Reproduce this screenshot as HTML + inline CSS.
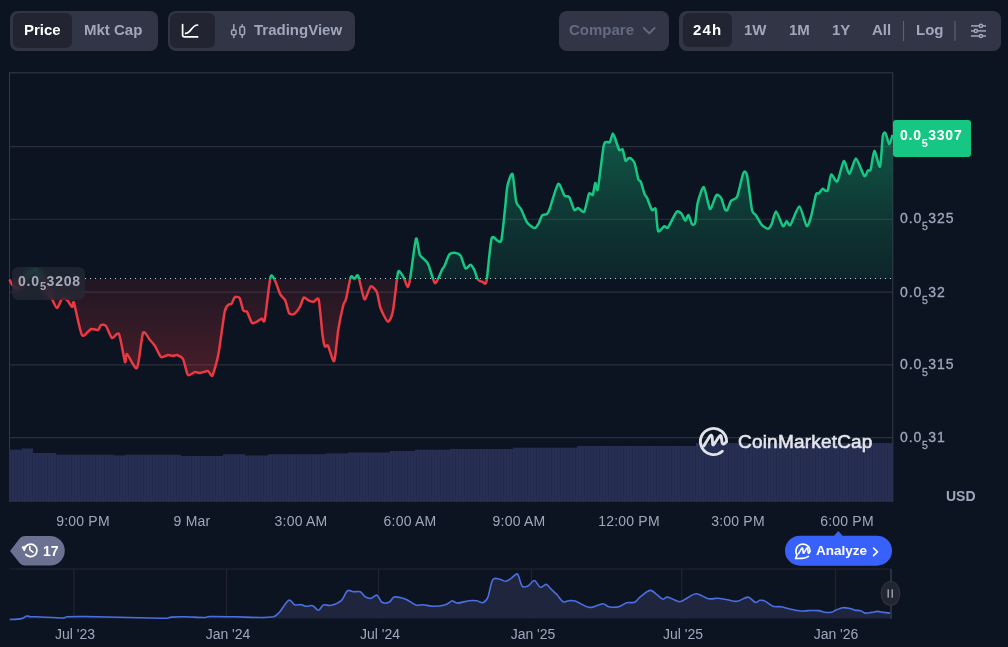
<!DOCTYPE html>
<html><head><meta charset="utf-8"><style>
*{margin:0;padding:0;box-sizing:border-box}
html,body{width:1008px;height:647px;overflow:hidden;background:#0d1421;font-family:"Liberation Sans",sans-serif}
.t{position:absolute;white-space:nowrap;will-change:transform}
.b{position:absolute}
svg{position:absolute;left:0;top:0}
sub{font-size:0.75em;vertical-align:baseline;position:relative;top:0.62em;letter-spacing:0.5px}
</style></head><body>
<div class="b" style="left:10px;top:11px;width:148px;height:40px;border-radius:8px;background:#323546"></div><div class="b" style="left:13px;top:13px;width:59px;height:35px;border-radius:6px;background:#222531"></div><div class="t" style="left:23.5px;top:20.72px;font-size:15px;line-height:17.23px;color:#ffffff;font-weight:700;">Price</div>
<div class="t" style="left:83.5px;top:20.72px;font-size:15px;line-height:17.23px;color:#a1a7bb;font-weight:700;">Mkt Cap</div>
<div class="b" style="left:168px;top:11px;width:187px;height:40px;border-radius:8px;background:#323546"></div><div class="b" style="left:170px;top:13px;width:45px;height:35px;border-radius:6px;background:#222531"></div><svg width="1008" height="647" style="pointer-events:none"><path d="M182.6,24.6 V35 Q182.6,36.9 184.5,36.9 H197.6" stroke="#fff" stroke-width="1.7" fill="none" stroke-linecap="round"/><path d="M185.6,33.4 C191.5,33.4 191.2,25 197.6,25" stroke="#fff" stroke-width="1.7" fill="none" stroke-linecap="round"/><g stroke="#a1a7bb" stroke-width="1.5" fill="none" stroke-linecap="round"><line x1="233.8" y1="24.8" x2="233.8" y2="37.6"/><rect x="231.55" y="29.95" width="4.5" height="4.9" rx="1.3" fill="#323546"/><line x1="242.2" y1="24.8" x2="242.2" y2="37.6"/><rect x="239.85" y="26.85" width="4.7" height="7.8" rx="1.3" fill="#323546"/></g></svg><div class="t" style="left:253.5px;top:21.12px;font-size:15px;line-height:17.23px;color:#a1a7bb;font-weight:700;">TradingView</div>
<div class="b" style="left:559px;top:11px;width:110px;height:40px;border-radius:8px;background:#323546"></div><div class="t" style="left:569px;top:21.22px;font-size:15px;line-height:17.23px;color:#646b80;font-weight:700;">Compare</div>
<svg width="1008" height="647"><path d="M643.8,28 L649.2,33.4 L654.6,28" stroke="#646b80" stroke-width="1.8" fill="none" stroke-linecap="round" stroke-linejoin="round"/></svg><div class="b" style="left:679px;top:11px;width:321.6px;height:39.6px;border-radius:8px;background:#323546"></div><div class="b" style="left:683px;top:13px;width:49px;height:34px;border-radius:6px;background:#222531"></div><div class="t" style="left:692.5px;top:21.22px;font-size:15px;line-height:17.23px;color:#ffffff;font-weight:700;letter-spacing:1.2px">24h</div>
<div class="t" style="left:744px;top:21.22px;font-size:15px;line-height:17.23px;color:#a1a7bb;font-weight:700;">1W</div>
<div class="t" style="left:788.5px;top:21.22px;font-size:15px;line-height:17.23px;color:#a1a7bb;font-weight:700;">1M</div>
<div class="t" style="left:831.5px;top:21.22px;font-size:15px;line-height:17.23px;color:#a1a7bb;font-weight:700;">1Y</div>
<div class="t" style="left:871.5px;top:21.22px;font-size:15px;line-height:17.23px;color:#a1a7bb;font-weight:700;">All</div>
<div class="t" style="left:916px;top:21.22px;font-size:15px;line-height:17.23px;color:#a1a7bb;font-weight:700;">Log</div>
<svg width="1008" height="647"><g stroke="#5b6075" stroke-width="1.2"><line x1="903.5" y1="21" x2="903.5" y2="41"/><line x1="955" y1="21" x2="955" y2="41"/></g><g stroke="#a1a7bb" stroke-width="1.5" fill="#323546"><line x1="971" y1="25.9" x2="986" y2="25.9"/><line x1="971" y1="30.9" x2="986" y2="30.9"/><line x1="971" y1="36" x2="986" y2="36"/><circle cx="980.9" cy="25.9" r="1.6"/><circle cx="975.8" cy="30.9" r="1.6"/><circle cx="980.9" cy="36" r="1.6"/></g></svg><svg width="1008" height="647">
<defs>
<clipPath id="above"><rect x="0" y="0" width="893" height="279"/></clipPath>
<clipPath id="below"><rect x="0" y="279" width="893" height="300"/></clipPath>
<linearGradient id="gG" x1="0" y1="120" x2="0" y2="279" gradientUnits="userSpaceOnUse"><stop offset="0" stop-color="#16c784" stop-opacity="0.40"/><stop offset="0.283" stop-color="#16c784" stop-opacity="0.31"/><stop offset="0.692" stop-color="#16c784" stop-opacity="0.17"/><stop offset="1" stop-color="#16c784" stop-opacity="0.10"/></linearGradient>
<linearGradient id="gR" x1="0" y1="279" x2="0" y2="380" gradientUnits="userSpaceOnUse"><stop offset="0" stop-color="#ea3943" stop-opacity="0.09"/><stop offset="1" stop-color="#ea3943" stop-opacity="0.27"/></linearGradient>
</defs>
<g stroke="#2b2f3c" stroke-width="1.1">
<line x1="9" y1="72.8" x2="893" y2="72.8" stroke="#363a47" stroke-width="1"/>
<line x1="9" y1="146.6" x2="893" y2="146.6"/>
<line x1="9" y1="219.3" x2="893" y2="219.3"/>
<line x1="9" y1="292.1" x2="893" y2="292.1"/>
<line x1="9" y1="364.9" x2="893" y2="364.9"/>
<line x1="9" y1="437.6" x2="893" y2="437.6"/>
<line x1="9.5" y1="72.5" x2="9.5" y2="502" stroke="#343845" stroke-width="1"/>
<line x1="892.8" y1="72.5" x2="892.8" y2="502" stroke="#353946" stroke-width="1"/>
</g>
<clipPath id="volc"><path d="M9,501.5 L9,449.8 L22,449.8 L22,448.4 L33,448.4 L33,453 L56,453 L56,454.7 L114,454.7 L114,455.6 L125,455.6 L125,454.7 L181,454.7 L181,456 L223,456 L223,454.3 L245,454.3 L245,455.6 L268,455.6 L268,454.3 L326,454.3 L326,453.4 L348,453.4 L348,452.5 L390,452.5 L390,451 L415,451 L415,449.8 L450,449.8 L450,449 L513,449 L513,447.7 L577,447.7 L577,446 L696,446 L696,443 L893,443 L893,501.5 Z"/></clipPath>
<path d="M9,501.5 L9,449.8 L22,449.8 L22,448.4 L33,448.4 L33,453 L56,453 L56,454.7 L114,454.7 L114,455.6 L125,455.6 L125,454.7 L181,454.7 L181,456 L223,456 L223,454.3 L245,454.3 L245,455.6 L268,455.6 L268,454.3 L326,454.3 L326,453.4 L348,453.4 L348,452.5 L390,452.5 L390,451 L415,451 L415,449.8 L450,449.8 L450,449 L513,449 L513,447.7 L577,447.7 L577,446 L696,446 L696,443 L893,443 L893,501.5 Z" fill="#272f53"/>
<path d="M11.5,440 V502 M14.5,440 V502 M17.5,440 V502 M20.5,440 V502 M23.5,440 V502 M26.5,440 V502 M29.5,440 V502 M32.5,440 V502 M35.5,440 V502 M38.5,440 V502 M41.5,440 V502 M44.5,440 V502 M47.5,440 V502 M50.5,440 V502 M53.5,440 V502 M56.5,440 V502 M59.5,440 V502 M62.5,440 V502 M65.5,440 V502 M68.5,440 V502 M71.5,440 V502 M74.5,440 V502 M77.5,440 V502 M80.5,440 V502 M83.5,440 V502 M86.5,440 V502 M89.5,440 V502 M92.5,440 V502 M95.5,440 V502 M98.5,440 V502 M101.5,440 V502 M104.5,440 V502 M107.5,440 V502 M110.5,440 V502 M113.5,440 V502 M116.5,440 V502 M119.5,440 V502 M122.5,440 V502 M125.5,440 V502 M128.5,440 V502 M131.5,440 V502 M134.5,440 V502 M137.5,440 V502 M140.5,440 V502 M143.5,440 V502 M146.5,440 V502 M149.5,440 V502 M152.5,440 V502 M155.5,440 V502 M158.5,440 V502 M161.5,440 V502 M164.5,440 V502 M167.5,440 V502 M170.5,440 V502 M173.5,440 V502 M176.5,440 V502 M179.5,440 V502 M182.5,440 V502 M185.5,440 V502 M188.5,440 V502 M191.5,440 V502 M194.5,440 V502 M197.5,440 V502 M200.5,440 V502 M203.5,440 V502 M206.5,440 V502 M209.5,440 V502 M212.5,440 V502 M215.5,440 V502 M218.5,440 V502 M221.5,440 V502 M224.5,440 V502 M227.5,440 V502 M230.5,440 V502 M233.5,440 V502 M236.5,440 V502 M239.5,440 V502 M242.5,440 V502 M245.5,440 V502 M248.5,440 V502 M251.5,440 V502 M254.5,440 V502 M257.5,440 V502 M260.5,440 V502 M263.5,440 V502 M266.5,440 V502 M269.5,440 V502 M272.5,440 V502 M275.5,440 V502 M278.5,440 V502 M281.5,440 V502 M284.5,440 V502 M287.5,440 V502 M290.5,440 V502 M293.5,440 V502 M296.5,440 V502 M299.5,440 V502 M302.5,440 V502 M305.5,440 V502 M308.5,440 V502 M311.5,440 V502 M314.5,440 V502 M317.5,440 V502 M320.5,440 V502 M323.5,440 V502 M326.5,440 V502 M329.5,440 V502 M332.5,440 V502 M335.5,440 V502 M338.5,440 V502 M341.5,440 V502 M344.5,440 V502 M347.5,440 V502 M350.5,440 V502 M353.5,440 V502 M356.5,440 V502 M359.5,440 V502 M362.5,440 V502 M365.5,440 V502 M368.5,440 V502 M371.5,440 V502 M374.5,440 V502 M377.5,440 V502 M380.5,440 V502 M383.5,440 V502 M386.5,440 V502 M389.5,440 V502 M392.5,440 V502 M395.5,440 V502 M398.5,440 V502 M401.5,440 V502 M404.5,440 V502 M407.5,440 V502 M410.5,440 V502 M413.5,440 V502 M416.5,440 V502 M419.5,440 V502 M422.5,440 V502 M425.5,440 V502 M428.5,440 V502 M431.5,440 V502 M434.5,440 V502 M437.5,440 V502 M440.5,440 V502 M443.5,440 V502 M446.5,440 V502 M449.5,440 V502 M452.5,440 V502 M455.5,440 V502 M458.5,440 V502 M461.5,440 V502 M464.5,440 V502 M467.5,440 V502 M470.5,440 V502 M473.5,440 V502 M476.5,440 V502 M479.5,440 V502 M482.5,440 V502 M485.5,440 V502 M488.5,440 V502 M491.5,440 V502 M494.5,440 V502 M497.5,440 V502 M500.5,440 V502 M503.5,440 V502 M506.5,440 V502 M509.5,440 V502 M512.5,440 V502 M515.5,440 V502 M518.5,440 V502 M521.5,440 V502 M524.5,440 V502 M527.5,440 V502 M530.5,440 V502 M533.5,440 V502 M536.5,440 V502 M539.5,440 V502 M542.5,440 V502 M545.5,440 V502 M548.5,440 V502 M551.5,440 V502 M554.5,440 V502 M557.5,440 V502 M560.5,440 V502 M563.5,440 V502 M566.5,440 V502 M569.5,440 V502 M572.5,440 V502 M575.5,440 V502 M578.5,440 V502 M581.5,440 V502 M584.5,440 V502 M587.5,440 V502 M590.5,440 V502 M593.5,440 V502 M596.5,440 V502 M599.5,440 V502 M602.5,440 V502 M605.5,440 V502 M608.5,440 V502 M611.5,440 V502 M614.5,440 V502 M617.5,440 V502 M620.5,440 V502 M623.5,440 V502 M626.5,440 V502 M629.5,440 V502 M632.5,440 V502 M635.5,440 V502 M638.5,440 V502 M641.5,440 V502 M644.5,440 V502 M647.5,440 V502 M650.5,440 V502 M653.5,440 V502 M656.5,440 V502 M659.5,440 V502 M662.5,440 V502 M665.5,440 V502 M668.5,440 V502 M671.5,440 V502 M674.5,440 V502 M677.5,440 V502 M680.5,440 V502 M683.5,440 V502 M686.5,440 V502 M689.5,440 V502 M692.5,440 V502 M695.5,440 V502 M698.5,440 V502 M701.5,440 V502 M704.5,440 V502 M707.5,440 V502 M710.5,440 V502 M713.5,440 V502 M716.5,440 V502 M719.5,440 V502 M722.5,440 V502 M725.5,440 V502 M728.5,440 V502 M731.5,440 V502 M734.5,440 V502 M737.5,440 V502 M740.5,440 V502 M743.5,440 V502 M746.5,440 V502 M749.5,440 V502 M752.5,440 V502 M755.5,440 V502 M758.5,440 V502 M761.5,440 V502 M764.5,440 V502 M767.5,440 V502 M770.5,440 V502 M773.5,440 V502 M776.5,440 V502 M779.5,440 V502 M782.5,440 V502 M785.5,440 V502 M788.5,440 V502 M791.5,440 V502 M794.5,440 V502 M797.5,440 V502 M800.5,440 V502 M803.5,440 V502 M806.5,440 V502 M809.5,440 V502 M812.5,440 V502 M815.5,440 V502 M818.5,440 V502 M821.5,440 V502 M824.5,440 V502 M827.5,440 V502 M830.5,440 V502 M833.5,440 V502 M836.5,440 V502 M839.5,440 V502 M842.5,440 V502 M845.5,440 V502 M848.5,440 V502 M851.5,440 V502 M854.5,440 V502 M857.5,440 V502 M860.5,440 V502 M863.5,440 V502 M866.5,440 V502 M869.5,440 V502 M872.5,440 V502 M875.5,440 V502 M878.5,440 V502 M881.5,440 V502 M884.5,440 V502 M887.5,440 V502 M890.5,440 V502 " stroke="#232a4d" stroke-width="1" clip-path="url(#volc)"/>
<line x1="9" y1="501" x2="893" y2="501" stroke="#2c3350" stroke-width="1"/>
<path d="M9.5,279.4 C9.8,280.1 11.5,284.0 12.5,285.0 C13.5,286.0 16.7,288.6 18.0,288.0 C19.3,287.4 22.6,281.9 24.0,280.0 C25.4,278.1 28.5,273.2 30.0,272.0 C31.5,270.8 35.4,268.7 37.0,270.0 C38.6,271.3 42.2,279.6 44.0,283.0 C45.8,286.4 50.5,296.1 52.0,299.0 C53.5,301.9 55.8,308.0 57.0,308.0 C58.2,308.0 60.8,299.9 62.0,299.0 C63.2,298.1 65.8,299.1 67.0,300.0 C68.2,300.9 71.2,306.6 72.0,307.0 C72.8,307.4 72.8,299.7 74.0,303.0 C75.2,306.3 80.0,332.0 82.0,335.0 C84.0,338.0 89.1,329.6 91.0,329.0 C92.9,328.4 96.8,330.5 98.0,330.0 C99.2,329.5 100.1,325.5 101.0,325.0 C101.9,324.5 104.7,324.5 106.0,326.0 C107.3,327.5 110.5,337.1 112.0,338.0 C113.5,338.9 117.5,331.2 119.0,334.0 C120.5,336.8 124.1,359.7 125.0,362.0 C125.9,364.3 125.6,353.3 127.0,354.0 C128.4,354.7 135.1,370.4 137.0,368.0 C138.9,365.6 141.5,336.3 143.0,333.0 C144.5,329.7 148.6,338.5 150.0,340.0 C151.4,341.5 153.7,344.0 155.0,346.0 C156.3,348.0 159.5,355.9 161.0,357.0 C162.5,358.1 166.6,355.1 168.0,355.0 C169.4,354.9 171.9,356.0 173.0,356.0 C174.1,356.0 175.8,354.6 177.0,355.0 C178.2,355.4 181.7,356.7 183.0,359.0 C184.3,361.3 186.6,373.5 188.0,375.0 C189.4,376.5 193.6,372.2 195.0,372.0 C196.4,371.8 198.5,373.1 200.0,373.0 C201.5,372.9 206.6,370.7 208.0,371.0 C209.4,371.3 211.2,377.5 212.4,375.5 C213.6,373.5 217.1,361.1 218.5,353.7 C219.9,346.3 223.5,317.4 224.7,311.7 C225.9,306.0 227.6,305.7 228.4,304.8 C229.2,303.9 230.9,304.7 231.6,303.8 C232.3,302.9 233.7,298.1 234.6,297.4 C235.5,296.7 238.6,296.5 239.6,298.0 C240.6,299.5 242.4,308.9 243.3,310.5 C244.2,312.1 246.0,310.3 247.0,311.7 C248.0,313.1 250.8,321.6 252.0,322.8 C253.2,324.0 255.8,322.1 256.9,321.6 C258.0,321.1 260.9,318.8 261.8,318.6 C262.7,318.4 263.8,324.5 264.8,319.6 C265.8,314.7 269.3,281.4 270.5,277.0 C271.7,272.6 274.3,279.5 275.4,281.5 C276.5,283.5 279.1,292.2 280.3,294.4 C281.5,296.6 284.3,298.4 285.3,300.6 C286.3,302.8 288.0,311.4 289.0,313.0 C290.0,314.6 292.7,314.7 294.0,314.0 C295.3,313.3 298.9,308.6 300.0,306.7 C301.1,304.8 302.8,298.3 303.8,297.6 C304.8,296.9 307.6,300.1 308.8,300.6 C310.0,301.1 312.5,301.9 313.7,301.8 C314.9,301.7 317.7,296.0 318.7,299.8 C319.7,303.6 321.7,328.6 322.4,334.0 C323.1,339.4 324.1,344.9 324.8,346.3 C325.5,347.7 326.9,344.1 328.0,345.8 C329.1,347.5 333.0,363.0 334.2,361.0 C335.4,359.0 337.3,335.6 338.4,329.0 C339.5,322.4 342.5,308.3 343.4,304.8 C344.3,301.3 345.0,302.5 345.9,299.3 C346.8,296.1 349.8,279.4 350.8,277.0 C351.8,274.6 353.6,279.1 354.5,279.0 C355.4,278.9 357.0,273.4 358.2,275.8 C359.4,278.2 363.0,298.1 364.4,299.3 C365.8,300.5 369.2,287.4 370.6,286.5 C372.0,285.6 375.6,289.5 376.8,292.0 C378.0,294.5 379.2,304.5 380.5,308.0 C381.8,311.5 386.5,321.2 387.9,321.6 C389.3,322.0 391.6,317.3 392.8,311.7 C394.0,306.1 396.9,277.9 397.8,273.4 C398.7,268.9 400.0,272.3 400.7,272.9 C401.4,273.5 403.2,276.7 404.0,278.3 C404.8,279.9 407.0,286.8 407.7,287.0 C408.4,287.2 409.0,285.2 410.0,279.6 C411.0,274.0 414.9,241.7 416.0,238.8 C417.1,235.9 418.8,252.4 419.8,254.8 C420.8,257.2 423.7,258.6 424.7,259.8 C425.7,261.0 427.2,262.0 428.4,264.7 C429.6,267.4 433.4,281.2 434.6,282.8 C435.8,284.4 437.4,279.8 438.3,278.3 C439.2,276.8 441.3,271.1 442.0,269.7 C442.7,268.3 443.6,267.8 444.5,266.0 C445.4,264.2 448.1,255.9 449.4,254.4 C450.7,252.9 454.3,252.8 455.6,252.9 C456.9,253.0 459.4,253.8 460.6,255.6 C461.8,257.4 464.3,267.3 465.5,268.4 C466.7,269.5 469.5,264.5 470.5,264.7 C471.5,264.9 473.3,268.0 474.2,269.7 C475.1,271.4 476.9,278.2 477.9,279.6 C478.9,281.0 481.8,281.8 482.8,282.0 C483.8,282.2 485.5,286.3 486.5,281.3 C487.5,276.3 490.2,243.5 491.5,238.8 C492.8,234.1 496.5,240.7 497.7,240.8 C498.9,240.9 500.5,243.7 501.4,240.0 C502.3,236.3 504.3,215.3 505.0,209.0 C505.7,202.7 506.6,189.7 507.5,185.6 C508.4,181.5 511.5,172.1 512.5,174.0 C513.5,175.9 515.2,197.6 516.2,201.7 C517.2,205.8 519.7,206.6 521.0,209.0 C522.3,211.4 525.7,220.5 527.3,222.7 C528.9,224.9 533.4,227.9 534.7,228.1 C536.0,228.3 537.5,225.5 538.4,224.0 C539.3,222.5 541.2,216.5 542.2,215.3 C543.2,214.1 546.1,214.7 547.0,214.0 C547.9,213.3 548.3,212.5 549.6,209.0 C550.9,205.5 556.5,185.5 558.2,183.9 C559.9,182.3 563.1,193.9 564.4,195.5 C565.7,197.1 568.1,195.5 569.3,197.2 C570.5,198.9 573.3,208.7 574.3,209.9 C575.3,211.1 576.8,207.7 578.0,207.9 C579.2,208.1 582.9,213.2 584.2,211.6 C585.5,210.0 588.0,195.8 589.0,193.8 C590.0,191.8 592.1,196.1 592.8,194.8 C593.5,193.5 594.7,183.6 595.3,183.0 C595.9,182.4 596.8,193.6 597.8,189.3 C598.8,185.0 602.6,151.3 603.7,145.8 C604.8,140.3 606.7,142.5 607.4,142.1 C608.1,141.7 609.3,143.1 609.9,142.1 C610.5,141.1 612.2,133.6 612.9,133.5 C613.6,133.4 615.3,139.1 616.0,141.0 C616.7,142.9 618.5,149.0 619.3,150.0 C620.1,151.0 622.0,148.4 622.7,149.6 C623.4,150.8 624.8,159.7 625.5,160.7 C626.2,161.7 627.7,158.4 628.4,158.2 C629.1,158.0 630.9,158.4 631.6,159.0 C632.3,159.6 633.8,160.8 634.6,163.2 C635.4,165.6 637.6,177.0 638.3,179.2 C639.0,181.4 640.1,180.0 640.8,181.7 C641.5,183.4 643.8,192.1 644.5,194.0 C645.2,195.9 646.1,195.9 647.0,197.8 C647.9,199.7 650.9,208.7 651.9,210.0 C652.9,211.3 654.9,206.6 655.6,209.0 C656.3,211.4 657.1,229.0 658.1,231.0 C659.1,233.0 663.1,226.6 664.3,226.2 C665.5,225.8 666.6,229.1 668.0,227.4 C669.4,225.7 675.0,213.5 676.6,211.9 C678.2,210.3 680.6,212.8 681.6,213.8 C682.6,214.8 684.5,220.7 685.3,220.8 C686.1,220.9 687.7,214.6 688.5,215.0 C689.3,215.4 691.2,223.3 692.0,224.2 C692.8,225.1 694.5,225.0 695.2,222.5 C695.9,220.0 696.7,206.8 697.7,202.7 C698.7,198.6 702.4,186.4 703.8,187.1 C705.2,187.8 708.6,207.9 710.0,208.9 C711.4,209.9 714.9,196.6 716.2,195.3 C717.5,194.0 720.1,196.2 721.1,197.8 C722.1,199.4 724.1,207.5 724.8,208.9 C725.5,210.3 726.6,211.0 727.3,210.1 C728.0,209.2 729.8,202.6 731.0,201.0 C732.2,199.4 735.8,199.8 737.2,196.5 C738.6,193.2 742.2,175.4 743.4,173.0 C744.6,170.6 746.1,171.2 747.1,175.5 C748.1,179.8 751.0,205.5 752.0,210.1 C753.0,214.7 754.5,213.3 755.7,215.0 C756.9,216.7 760.5,223.4 761.9,225.0 C763.3,226.6 766.9,228.9 768.1,228.7 C769.3,228.5 770.9,225.7 771.8,223.7 C772.7,221.7 774.7,211.1 776.0,211.4 C777.3,211.7 781.8,225.1 783.0,226.2 C784.2,227.3 785.7,221.3 786.6,221.2 C787.5,221.1 788.9,226.7 790.4,225.0 C791.9,223.3 797.4,206.4 799.3,206.5 C801.2,206.6 805.3,224.9 806.7,226.0 C808.1,227.1 810.2,219.4 811.3,215.7 C812.4,212.0 815.1,197.0 816.0,194.4 C816.9,191.8 818.0,194.2 818.8,193.5 C819.6,192.8 821.7,189.1 822.5,188.8 C823.3,188.5 824.7,190.6 825.3,190.7 C825.9,190.8 827.3,191.7 828.0,189.8 C828.7,187.9 830.1,175.6 831.2,174.6 C832.3,173.6 835.8,183.0 837.3,181.4 C838.8,179.8 842.4,161.9 843.8,161.0 C845.2,160.1 848.0,174.3 849.4,174.0 C850.8,173.7 854.2,158.4 855.9,158.6 C857.6,158.8 862.8,174.5 864.2,175.9 C865.6,177.3 867.2,171.1 868.0,170.3 C868.8,169.5 870.0,171.7 870.7,169.4 C871.4,167.1 873.3,151.1 874.4,150.8 C875.5,150.5 879.0,168.3 880.0,166.6 C881.0,164.9 882.2,139.9 882.8,136.0 C883.4,132.1 884.7,132.2 885.5,133.2 C886.3,134.2 888.5,144.1 889.3,144.3 C890.1,144.5 892.1,136.1 892.5,135.0 L892.5,279 L9.5,279 Z" fill="url(#gG)" clip-path="url(#above)"/>
<path d="M9.5,279.4 C9.8,280.1 11.5,284.0 12.5,285.0 C13.5,286.0 16.7,288.6 18.0,288.0 C19.3,287.4 22.6,281.9 24.0,280.0 C25.4,278.1 28.5,273.2 30.0,272.0 C31.5,270.8 35.4,268.7 37.0,270.0 C38.6,271.3 42.2,279.6 44.0,283.0 C45.8,286.4 50.5,296.1 52.0,299.0 C53.5,301.9 55.8,308.0 57.0,308.0 C58.2,308.0 60.8,299.9 62.0,299.0 C63.2,298.1 65.8,299.1 67.0,300.0 C68.2,300.9 71.2,306.6 72.0,307.0 C72.8,307.4 72.8,299.7 74.0,303.0 C75.2,306.3 80.0,332.0 82.0,335.0 C84.0,338.0 89.1,329.6 91.0,329.0 C92.9,328.4 96.8,330.5 98.0,330.0 C99.2,329.5 100.1,325.5 101.0,325.0 C101.9,324.5 104.7,324.5 106.0,326.0 C107.3,327.5 110.5,337.1 112.0,338.0 C113.5,338.9 117.5,331.2 119.0,334.0 C120.5,336.8 124.1,359.7 125.0,362.0 C125.9,364.3 125.6,353.3 127.0,354.0 C128.4,354.7 135.1,370.4 137.0,368.0 C138.9,365.6 141.5,336.3 143.0,333.0 C144.5,329.7 148.6,338.5 150.0,340.0 C151.4,341.5 153.7,344.0 155.0,346.0 C156.3,348.0 159.5,355.9 161.0,357.0 C162.5,358.1 166.6,355.1 168.0,355.0 C169.4,354.9 171.9,356.0 173.0,356.0 C174.1,356.0 175.8,354.6 177.0,355.0 C178.2,355.4 181.7,356.7 183.0,359.0 C184.3,361.3 186.6,373.5 188.0,375.0 C189.4,376.5 193.6,372.2 195.0,372.0 C196.4,371.8 198.5,373.1 200.0,373.0 C201.5,372.9 206.6,370.7 208.0,371.0 C209.4,371.3 211.2,377.5 212.4,375.5 C213.6,373.5 217.1,361.1 218.5,353.7 C219.9,346.3 223.5,317.4 224.7,311.7 C225.9,306.0 227.6,305.7 228.4,304.8 C229.2,303.9 230.9,304.7 231.6,303.8 C232.3,302.9 233.7,298.1 234.6,297.4 C235.5,296.7 238.6,296.5 239.6,298.0 C240.6,299.5 242.4,308.9 243.3,310.5 C244.2,312.1 246.0,310.3 247.0,311.7 C248.0,313.1 250.8,321.6 252.0,322.8 C253.2,324.0 255.8,322.1 256.9,321.6 C258.0,321.1 260.9,318.8 261.8,318.6 C262.7,318.4 263.8,324.5 264.8,319.6 C265.8,314.7 269.3,281.4 270.5,277.0 C271.7,272.6 274.3,279.5 275.4,281.5 C276.5,283.5 279.1,292.2 280.3,294.4 C281.5,296.6 284.3,298.4 285.3,300.6 C286.3,302.8 288.0,311.4 289.0,313.0 C290.0,314.6 292.7,314.7 294.0,314.0 C295.3,313.3 298.9,308.6 300.0,306.7 C301.1,304.8 302.8,298.3 303.8,297.6 C304.8,296.9 307.6,300.1 308.8,300.6 C310.0,301.1 312.5,301.9 313.7,301.8 C314.9,301.7 317.7,296.0 318.7,299.8 C319.7,303.6 321.7,328.6 322.4,334.0 C323.1,339.4 324.1,344.9 324.8,346.3 C325.5,347.7 326.9,344.1 328.0,345.8 C329.1,347.5 333.0,363.0 334.2,361.0 C335.4,359.0 337.3,335.6 338.4,329.0 C339.5,322.4 342.5,308.3 343.4,304.8 C344.3,301.3 345.0,302.5 345.9,299.3 C346.8,296.1 349.8,279.4 350.8,277.0 C351.8,274.6 353.6,279.1 354.5,279.0 C355.4,278.9 357.0,273.4 358.2,275.8 C359.4,278.2 363.0,298.1 364.4,299.3 C365.8,300.5 369.2,287.4 370.6,286.5 C372.0,285.6 375.6,289.5 376.8,292.0 C378.0,294.5 379.2,304.5 380.5,308.0 C381.8,311.5 386.5,321.2 387.9,321.6 C389.3,322.0 391.6,317.3 392.8,311.7 C394.0,306.1 396.9,277.9 397.8,273.4 C398.7,268.9 400.0,272.3 400.7,272.9 C401.4,273.5 403.2,276.7 404.0,278.3 C404.8,279.9 407.0,286.8 407.7,287.0 C408.4,287.2 409.0,285.2 410.0,279.6 C411.0,274.0 414.9,241.7 416.0,238.8 C417.1,235.9 418.8,252.4 419.8,254.8 C420.8,257.2 423.7,258.6 424.7,259.8 C425.7,261.0 427.2,262.0 428.4,264.7 C429.6,267.4 433.4,281.2 434.6,282.8 C435.8,284.4 437.4,279.8 438.3,278.3 C439.2,276.8 441.3,271.1 442.0,269.7 C442.7,268.3 443.6,267.8 444.5,266.0 C445.4,264.2 448.1,255.9 449.4,254.4 C450.7,252.9 454.3,252.8 455.6,252.9 C456.9,253.0 459.4,253.8 460.6,255.6 C461.8,257.4 464.3,267.3 465.5,268.4 C466.7,269.5 469.5,264.5 470.5,264.7 C471.5,264.9 473.3,268.0 474.2,269.7 C475.1,271.4 476.9,278.2 477.9,279.6 C478.9,281.0 481.8,281.8 482.8,282.0 C483.8,282.2 485.5,286.3 486.5,281.3 C487.5,276.3 490.2,243.5 491.5,238.8 C492.8,234.1 496.5,240.7 497.7,240.8 C498.9,240.9 500.5,243.7 501.4,240.0 C502.3,236.3 504.3,215.3 505.0,209.0 C505.7,202.7 506.6,189.7 507.5,185.6 C508.4,181.5 511.5,172.1 512.5,174.0 C513.5,175.9 515.2,197.6 516.2,201.7 C517.2,205.8 519.7,206.6 521.0,209.0 C522.3,211.4 525.7,220.5 527.3,222.7 C528.9,224.9 533.4,227.9 534.7,228.1 C536.0,228.3 537.5,225.5 538.4,224.0 C539.3,222.5 541.2,216.5 542.2,215.3 C543.2,214.1 546.1,214.7 547.0,214.0 C547.9,213.3 548.3,212.5 549.6,209.0 C550.9,205.5 556.5,185.5 558.2,183.9 C559.9,182.3 563.1,193.9 564.4,195.5 C565.7,197.1 568.1,195.5 569.3,197.2 C570.5,198.9 573.3,208.7 574.3,209.9 C575.3,211.1 576.8,207.7 578.0,207.9 C579.2,208.1 582.9,213.2 584.2,211.6 C585.5,210.0 588.0,195.8 589.0,193.8 C590.0,191.8 592.1,196.1 592.8,194.8 C593.5,193.5 594.7,183.6 595.3,183.0 C595.9,182.4 596.8,193.6 597.8,189.3 C598.8,185.0 602.6,151.3 603.7,145.8 C604.8,140.3 606.7,142.5 607.4,142.1 C608.1,141.7 609.3,143.1 609.9,142.1 C610.5,141.1 612.2,133.6 612.9,133.5 C613.6,133.4 615.3,139.1 616.0,141.0 C616.7,142.9 618.5,149.0 619.3,150.0 C620.1,151.0 622.0,148.4 622.7,149.6 C623.4,150.8 624.8,159.7 625.5,160.7 C626.2,161.7 627.7,158.4 628.4,158.2 C629.1,158.0 630.9,158.4 631.6,159.0 C632.3,159.6 633.8,160.8 634.6,163.2 C635.4,165.6 637.6,177.0 638.3,179.2 C639.0,181.4 640.1,180.0 640.8,181.7 C641.5,183.4 643.8,192.1 644.5,194.0 C645.2,195.9 646.1,195.9 647.0,197.8 C647.9,199.7 650.9,208.7 651.9,210.0 C652.9,211.3 654.9,206.6 655.6,209.0 C656.3,211.4 657.1,229.0 658.1,231.0 C659.1,233.0 663.1,226.6 664.3,226.2 C665.5,225.8 666.6,229.1 668.0,227.4 C669.4,225.7 675.0,213.5 676.6,211.9 C678.2,210.3 680.6,212.8 681.6,213.8 C682.6,214.8 684.5,220.7 685.3,220.8 C686.1,220.9 687.7,214.6 688.5,215.0 C689.3,215.4 691.2,223.3 692.0,224.2 C692.8,225.1 694.5,225.0 695.2,222.5 C695.9,220.0 696.7,206.8 697.7,202.7 C698.7,198.6 702.4,186.4 703.8,187.1 C705.2,187.8 708.6,207.9 710.0,208.9 C711.4,209.9 714.9,196.6 716.2,195.3 C717.5,194.0 720.1,196.2 721.1,197.8 C722.1,199.4 724.1,207.5 724.8,208.9 C725.5,210.3 726.6,211.0 727.3,210.1 C728.0,209.2 729.8,202.6 731.0,201.0 C732.2,199.4 735.8,199.8 737.2,196.5 C738.6,193.2 742.2,175.4 743.4,173.0 C744.6,170.6 746.1,171.2 747.1,175.5 C748.1,179.8 751.0,205.5 752.0,210.1 C753.0,214.7 754.5,213.3 755.7,215.0 C756.9,216.7 760.5,223.4 761.9,225.0 C763.3,226.6 766.9,228.9 768.1,228.7 C769.3,228.5 770.9,225.7 771.8,223.7 C772.7,221.7 774.7,211.1 776.0,211.4 C777.3,211.7 781.8,225.1 783.0,226.2 C784.2,227.3 785.7,221.3 786.6,221.2 C787.5,221.1 788.9,226.7 790.4,225.0 C791.9,223.3 797.4,206.4 799.3,206.5 C801.2,206.6 805.3,224.9 806.7,226.0 C808.1,227.1 810.2,219.4 811.3,215.7 C812.4,212.0 815.1,197.0 816.0,194.4 C816.9,191.8 818.0,194.2 818.8,193.5 C819.6,192.8 821.7,189.1 822.5,188.8 C823.3,188.5 824.7,190.6 825.3,190.7 C825.9,190.8 827.3,191.7 828.0,189.8 C828.7,187.9 830.1,175.6 831.2,174.6 C832.3,173.6 835.8,183.0 837.3,181.4 C838.8,179.8 842.4,161.9 843.8,161.0 C845.2,160.1 848.0,174.3 849.4,174.0 C850.8,173.7 854.2,158.4 855.9,158.6 C857.6,158.8 862.8,174.5 864.2,175.9 C865.6,177.3 867.2,171.1 868.0,170.3 C868.8,169.5 870.0,171.7 870.7,169.4 C871.4,167.1 873.3,151.1 874.4,150.8 C875.5,150.5 879.0,168.3 880.0,166.6 C881.0,164.9 882.2,139.9 882.8,136.0 C883.4,132.1 884.7,132.2 885.5,133.2 C886.3,134.2 888.5,144.1 889.3,144.3 C890.1,144.5 892.1,136.1 892.5,135.0 L892.5,279 L9.5,279 Z" fill="url(#gR)" clip-path="url(#below)"/>
<rect x="85" y="278" width="1" height="1" fill="#c4c8d2"/><rect x="90" y="278" width="1" height="1" fill="#c4c8d2"/><rect x="95" y="278" width="1" height="1" fill="#c4c8d2"/><rect x="100" y="278" width="1" height="1" fill="#c4c8d2"/><rect x="105" y="278" width="1" height="1" fill="#c4c8d2"/><rect x="110" y="278" width="1" height="1" fill="#c4c8d2"/><rect x="115" y="278" width="1" height="1" fill="#c4c8d2"/><rect x="120" y="278" width="1" height="1" fill="#c4c8d2"/><rect x="125" y="278" width="1" height="1" fill="#c4c8d2"/><rect x="130" y="278" width="1" height="1" fill="#c4c8d2"/><rect x="135" y="278" width="1" height="1" fill="#c4c8d2"/><rect x="140" y="278" width="1" height="1" fill="#c4c8d2"/><rect x="145" y="278" width="1" height="1" fill="#c4c8d2"/><rect x="150" y="278" width="1" height="1" fill="#c4c8d2"/><rect x="155" y="278" width="1" height="1" fill="#c4c8d2"/><rect x="160" y="278" width="1" height="1" fill="#c4c8d2"/><rect x="165" y="278" width="1" height="1" fill="#c4c8d2"/><rect x="170" y="278" width="1" height="1" fill="#c4c8d2"/><rect x="175" y="278" width="1" height="1" fill="#c4c8d2"/><rect x="180" y="278" width="1" height="1" fill="#c4c8d2"/><rect x="185" y="278" width="1" height="1" fill="#c4c8d2"/><rect x="190" y="278" width="1" height="1" fill="#c4c8d2"/><rect x="195" y="278" width="1" height="1" fill="#c4c8d2"/><rect x="200" y="278" width="1" height="1" fill="#c4c8d2"/><rect x="205" y="278" width="1" height="1" fill="#c4c8d2"/><rect x="210" y="278" width="1" height="1" fill="#c4c8d2"/><rect x="215" y="278" width="1" height="1" fill="#c4c8d2"/><rect x="220" y="278" width="1" height="1" fill="#c4c8d2"/><rect x="225" y="278" width="1" height="1" fill="#c4c8d2"/><rect x="230" y="278" width="1" height="1" fill="#c4c8d2"/><rect x="235" y="278" width="1" height="1" fill="#c4c8d2"/><rect x="240" y="278" width="1" height="1" fill="#c4c8d2"/><rect x="245" y="278" width="1" height="1" fill="#c4c8d2"/><rect x="250" y="278" width="1" height="1" fill="#c4c8d2"/><rect x="255" y="278" width="1" height="1" fill="#c4c8d2"/><rect x="260" y="278" width="1" height="1" fill="#c4c8d2"/><rect x="265" y="278" width="1" height="1" fill="#c4c8d2"/><rect x="270" y="278" width="1" height="1" fill="#c4c8d2"/><rect x="275" y="278" width="1" height="1" fill="#c4c8d2"/><rect x="280" y="278" width="1" height="1" fill="#c4c8d2"/><rect x="285" y="278" width="1" height="1" fill="#c4c8d2"/><rect x="290" y="278" width="1" height="1" fill="#c4c8d2"/><rect x="295" y="278" width="1" height="1" fill="#c4c8d2"/><rect x="300" y="278" width="1" height="1" fill="#c4c8d2"/><rect x="305" y="278" width="1" height="1" fill="#c4c8d2"/><rect x="310" y="278" width="1" height="1" fill="#c4c8d2"/><rect x="315" y="278" width="1" height="1" fill="#c4c8d2"/><rect x="320" y="278" width="1" height="1" fill="#c4c8d2"/><rect x="325" y="278" width="1" height="1" fill="#c4c8d2"/><rect x="330" y="278" width="1" height="1" fill="#c4c8d2"/><rect x="335" y="278" width="1" height="1" fill="#c4c8d2"/><rect x="340" y="278" width="1" height="1" fill="#c4c8d2"/><rect x="345" y="278" width="1" height="1" fill="#c4c8d2"/><rect x="350" y="278" width="1" height="1" fill="#c4c8d2"/><rect x="355" y="278" width="1" height="1" fill="#c4c8d2"/><rect x="360" y="278" width="1" height="1" fill="#c4c8d2"/><rect x="365" y="278" width="1" height="1" fill="#c4c8d2"/><rect x="370" y="278" width="1" height="1" fill="#c4c8d2"/><rect x="375" y="278" width="1" height="1" fill="#c4c8d2"/><rect x="380" y="278" width="1" height="1" fill="#c4c8d2"/><rect x="385" y="278" width="1" height="1" fill="#c4c8d2"/><rect x="390" y="278" width="1" height="1" fill="#c4c8d2"/><rect x="395" y="278" width="1" height="1" fill="#c4c8d2"/><rect x="400" y="278" width="1" height="1" fill="#c4c8d2"/><rect x="405" y="278" width="1" height="1" fill="#c4c8d2"/><rect x="410" y="278" width="1" height="1" fill="#c4c8d2"/><rect x="415" y="278" width="1" height="1" fill="#c4c8d2"/><rect x="420" y="278" width="1" height="1" fill="#c4c8d2"/><rect x="425" y="278" width="1" height="1" fill="#c4c8d2"/><rect x="430" y="278" width="1" height="1" fill="#c4c8d2"/><rect x="435" y="278" width="1" height="1" fill="#c4c8d2"/><rect x="440" y="278" width="1" height="1" fill="#c4c8d2"/><rect x="445" y="278" width="1" height="1" fill="#c4c8d2"/><rect x="450" y="278" width="1" height="1" fill="#c4c8d2"/><rect x="455" y="278" width="1" height="1" fill="#c4c8d2"/><rect x="460" y="278" width="1" height="1" fill="#c4c8d2"/><rect x="465" y="278" width="1" height="1" fill="#c4c8d2"/><rect x="470" y="278" width="1" height="1" fill="#c4c8d2"/><rect x="475" y="278" width="1" height="1" fill="#c4c8d2"/><rect x="480" y="278" width="1" height="1" fill="#c4c8d2"/><rect x="485" y="278" width="1" height="1" fill="#c4c8d2"/><rect x="490" y="278" width="1" height="1" fill="#c4c8d2"/><rect x="495" y="278" width="1" height="1" fill="#c4c8d2"/><rect x="500" y="278" width="1" height="1" fill="#c4c8d2"/><rect x="505" y="278" width="1" height="1" fill="#c4c8d2"/><rect x="510" y="278" width="1" height="1" fill="#c4c8d2"/><rect x="515" y="278" width="1" height="1" fill="#c4c8d2"/><rect x="520" y="278" width="1" height="1" fill="#c4c8d2"/><rect x="525" y="278" width="1" height="1" fill="#c4c8d2"/><rect x="530" y="278" width="1" height="1" fill="#c4c8d2"/><rect x="535" y="278" width="1" height="1" fill="#c4c8d2"/><rect x="540" y="278" width="1" height="1" fill="#c4c8d2"/><rect x="545" y="278" width="1" height="1" fill="#c4c8d2"/><rect x="550" y="278" width="1" height="1" fill="#c4c8d2"/><rect x="555" y="278" width="1" height="1" fill="#c4c8d2"/><rect x="560" y="278" width="1" height="1" fill="#c4c8d2"/><rect x="565" y="278" width="1" height="1" fill="#c4c8d2"/><rect x="570" y="278" width="1" height="1" fill="#c4c8d2"/><rect x="575" y="278" width="1" height="1" fill="#c4c8d2"/><rect x="580" y="278" width="1" height="1" fill="#c4c8d2"/><rect x="585" y="278" width="1" height="1" fill="#c4c8d2"/><rect x="590" y="278" width="1" height="1" fill="#c4c8d2"/><rect x="595" y="278" width="1" height="1" fill="#c4c8d2"/><rect x="600" y="278" width="1" height="1" fill="#c4c8d2"/><rect x="605" y="278" width="1" height="1" fill="#c4c8d2"/><rect x="610" y="278" width="1" height="1" fill="#c4c8d2"/><rect x="615" y="278" width="1" height="1" fill="#c4c8d2"/><rect x="620" y="278" width="1" height="1" fill="#c4c8d2"/><rect x="625" y="278" width="1" height="1" fill="#c4c8d2"/><rect x="630" y="278" width="1" height="1" fill="#c4c8d2"/><rect x="635" y="278" width="1" height="1" fill="#c4c8d2"/><rect x="640" y="278" width="1" height="1" fill="#c4c8d2"/><rect x="645" y="278" width="1" height="1" fill="#c4c8d2"/><rect x="650" y="278" width="1" height="1" fill="#c4c8d2"/><rect x="655" y="278" width="1" height="1" fill="#c4c8d2"/><rect x="660" y="278" width="1" height="1" fill="#c4c8d2"/><rect x="665" y="278" width="1" height="1" fill="#c4c8d2"/><rect x="670" y="278" width="1" height="1" fill="#c4c8d2"/><rect x="675" y="278" width="1" height="1" fill="#c4c8d2"/><rect x="680" y="278" width="1" height="1" fill="#c4c8d2"/><rect x="685" y="278" width="1" height="1" fill="#c4c8d2"/><rect x="690" y="278" width="1" height="1" fill="#c4c8d2"/><rect x="695" y="278" width="1" height="1" fill="#c4c8d2"/><rect x="700" y="278" width="1" height="1" fill="#c4c8d2"/><rect x="705" y="278" width="1" height="1" fill="#c4c8d2"/><rect x="710" y="278" width="1" height="1" fill="#c4c8d2"/><rect x="715" y="278" width="1" height="1" fill="#c4c8d2"/><rect x="720" y="278" width="1" height="1" fill="#c4c8d2"/><rect x="725" y="278" width="1" height="1" fill="#c4c8d2"/><rect x="730" y="278" width="1" height="1" fill="#c4c8d2"/><rect x="735" y="278" width="1" height="1" fill="#c4c8d2"/><rect x="740" y="278" width="1" height="1" fill="#c4c8d2"/><rect x="745" y="278" width="1" height="1" fill="#c4c8d2"/><rect x="750" y="278" width="1" height="1" fill="#c4c8d2"/><rect x="755" y="278" width="1" height="1" fill="#c4c8d2"/><rect x="760" y="278" width="1" height="1" fill="#c4c8d2"/><rect x="765" y="278" width="1" height="1" fill="#c4c8d2"/><rect x="770" y="278" width="1" height="1" fill="#c4c8d2"/><rect x="775" y="278" width="1" height="1" fill="#c4c8d2"/><rect x="780" y="278" width="1" height="1" fill="#c4c8d2"/><rect x="785" y="278" width="1" height="1" fill="#c4c8d2"/><rect x="790" y="278" width="1" height="1" fill="#c4c8d2"/><rect x="795" y="278" width="1" height="1" fill="#c4c8d2"/><rect x="800" y="278" width="1" height="1" fill="#c4c8d2"/><rect x="805" y="278" width="1" height="1" fill="#c4c8d2"/><rect x="810" y="278" width="1" height="1" fill="#c4c8d2"/><rect x="815" y="278" width="1" height="1" fill="#c4c8d2"/><rect x="820" y="278" width="1" height="1" fill="#c4c8d2"/><rect x="825" y="278" width="1" height="1" fill="#c4c8d2"/><rect x="830" y="278" width="1" height="1" fill="#c4c8d2"/><rect x="835" y="278" width="1" height="1" fill="#c4c8d2"/><rect x="840" y="278" width="1" height="1" fill="#c4c8d2"/><rect x="845" y="278" width="1" height="1" fill="#c4c8d2"/><rect x="850" y="278" width="1" height="1" fill="#c4c8d2"/><rect x="855" y="278" width="1" height="1" fill="#c4c8d2"/><rect x="860" y="278" width="1" height="1" fill="#c4c8d2"/><rect x="865" y="278" width="1" height="1" fill="#c4c8d2"/><rect x="870" y="278" width="1" height="1" fill="#c4c8d2"/><rect x="875" y="278" width="1" height="1" fill="#c4c8d2"/><rect x="880" y="278" width="1" height="1" fill="#c4c8d2"/><rect x="885" y="278" width="1" height="1" fill="#c4c8d2"/><rect x="890" y="278" width="1" height="1" fill="#c4c8d2"/>
<path d="M9.5,279.4 C9.8,280.1 11.5,284.0 12.5,285.0 C13.5,286.0 16.7,288.6 18.0,288.0 C19.3,287.4 22.6,281.9 24.0,280.0 C25.4,278.1 28.5,273.2 30.0,272.0 C31.5,270.8 35.4,268.7 37.0,270.0 C38.6,271.3 42.2,279.6 44.0,283.0 C45.8,286.4 50.5,296.1 52.0,299.0 C53.5,301.9 55.8,308.0 57.0,308.0 C58.2,308.0 60.8,299.9 62.0,299.0 C63.2,298.1 65.8,299.1 67.0,300.0 C68.2,300.9 71.2,306.6 72.0,307.0 C72.8,307.4 72.8,299.7 74.0,303.0 C75.2,306.3 80.0,332.0 82.0,335.0 C84.0,338.0 89.1,329.6 91.0,329.0 C92.9,328.4 96.8,330.5 98.0,330.0 C99.2,329.5 100.1,325.5 101.0,325.0 C101.9,324.5 104.7,324.5 106.0,326.0 C107.3,327.5 110.5,337.1 112.0,338.0 C113.5,338.9 117.5,331.2 119.0,334.0 C120.5,336.8 124.1,359.7 125.0,362.0 C125.9,364.3 125.6,353.3 127.0,354.0 C128.4,354.7 135.1,370.4 137.0,368.0 C138.9,365.6 141.5,336.3 143.0,333.0 C144.5,329.7 148.6,338.5 150.0,340.0 C151.4,341.5 153.7,344.0 155.0,346.0 C156.3,348.0 159.5,355.9 161.0,357.0 C162.5,358.1 166.6,355.1 168.0,355.0 C169.4,354.9 171.9,356.0 173.0,356.0 C174.1,356.0 175.8,354.6 177.0,355.0 C178.2,355.4 181.7,356.7 183.0,359.0 C184.3,361.3 186.6,373.5 188.0,375.0 C189.4,376.5 193.6,372.2 195.0,372.0 C196.4,371.8 198.5,373.1 200.0,373.0 C201.5,372.9 206.6,370.7 208.0,371.0 C209.4,371.3 211.2,377.5 212.4,375.5 C213.6,373.5 217.1,361.1 218.5,353.7 C219.9,346.3 223.5,317.4 224.7,311.7 C225.9,306.0 227.6,305.7 228.4,304.8 C229.2,303.9 230.9,304.7 231.6,303.8 C232.3,302.9 233.7,298.1 234.6,297.4 C235.5,296.7 238.6,296.5 239.6,298.0 C240.6,299.5 242.4,308.9 243.3,310.5 C244.2,312.1 246.0,310.3 247.0,311.7 C248.0,313.1 250.8,321.6 252.0,322.8 C253.2,324.0 255.8,322.1 256.9,321.6 C258.0,321.1 260.9,318.8 261.8,318.6 C262.7,318.4 263.8,324.5 264.8,319.6 C265.8,314.7 269.3,281.4 270.5,277.0 C271.7,272.6 274.3,279.5 275.4,281.5 C276.5,283.5 279.1,292.2 280.3,294.4 C281.5,296.6 284.3,298.4 285.3,300.6 C286.3,302.8 288.0,311.4 289.0,313.0 C290.0,314.6 292.7,314.7 294.0,314.0 C295.3,313.3 298.9,308.6 300.0,306.7 C301.1,304.8 302.8,298.3 303.8,297.6 C304.8,296.9 307.6,300.1 308.8,300.6 C310.0,301.1 312.5,301.9 313.7,301.8 C314.9,301.7 317.7,296.0 318.7,299.8 C319.7,303.6 321.7,328.6 322.4,334.0 C323.1,339.4 324.1,344.9 324.8,346.3 C325.5,347.7 326.9,344.1 328.0,345.8 C329.1,347.5 333.0,363.0 334.2,361.0 C335.4,359.0 337.3,335.6 338.4,329.0 C339.5,322.4 342.5,308.3 343.4,304.8 C344.3,301.3 345.0,302.5 345.9,299.3 C346.8,296.1 349.8,279.4 350.8,277.0 C351.8,274.6 353.6,279.1 354.5,279.0 C355.4,278.9 357.0,273.4 358.2,275.8 C359.4,278.2 363.0,298.1 364.4,299.3 C365.8,300.5 369.2,287.4 370.6,286.5 C372.0,285.6 375.6,289.5 376.8,292.0 C378.0,294.5 379.2,304.5 380.5,308.0 C381.8,311.5 386.5,321.2 387.9,321.6 C389.3,322.0 391.6,317.3 392.8,311.7 C394.0,306.1 396.9,277.9 397.8,273.4 C398.7,268.9 400.0,272.3 400.7,272.9 C401.4,273.5 403.2,276.7 404.0,278.3 C404.8,279.9 407.0,286.8 407.7,287.0 C408.4,287.2 409.0,285.2 410.0,279.6 C411.0,274.0 414.9,241.7 416.0,238.8 C417.1,235.9 418.8,252.4 419.8,254.8 C420.8,257.2 423.7,258.6 424.7,259.8 C425.7,261.0 427.2,262.0 428.4,264.7 C429.6,267.4 433.4,281.2 434.6,282.8 C435.8,284.4 437.4,279.8 438.3,278.3 C439.2,276.8 441.3,271.1 442.0,269.7 C442.7,268.3 443.6,267.8 444.5,266.0 C445.4,264.2 448.1,255.9 449.4,254.4 C450.7,252.9 454.3,252.8 455.6,252.9 C456.9,253.0 459.4,253.8 460.6,255.6 C461.8,257.4 464.3,267.3 465.5,268.4 C466.7,269.5 469.5,264.5 470.5,264.7 C471.5,264.9 473.3,268.0 474.2,269.7 C475.1,271.4 476.9,278.2 477.9,279.6 C478.9,281.0 481.8,281.8 482.8,282.0 C483.8,282.2 485.5,286.3 486.5,281.3 C487.5,276.3 490.2,243.5 491.5,238.8 C492.8,234.1 496.5,240.7 497.7,240.8 C498.9,240.9 500.5,243.7 501.4,240.0 C502.3,236.3 504.3,215.3 505.0,209.0 C505.7,202.7 506.6,189.7 507.5,185.6 C508.4,181.5 511.5,172.1 512.5,174.0 C513.5,175.9 515.2,197.6 516.2,201.7 C517.2,205.8 519.7,206.6 521.0,209.0 C522.3,211.4 525.7,220.5 527.3,222.7 C528.9,224.9 533.4,227.9 534.7,228.1 C536.0,228.3 537.5,225.5 538.4,224.0 C539.3,222.5 541.2,216.5 542.2,215.3 C543.2,214.1 546.1,214.7 547.0,214.0 C547.9,213.3 548.3,212.5 549.6,209.0 C550.9,205.5 556.5,185.5 558.2,183.9 C559.9,182.3 563.1,193.9 564.4,195.5 C565.7,197.1 568.1,195.5 569.3,197.2 C570.5,198.9 573.3,208.7 574.3,209.9 C575.3,211.1 576.8,207.7 578.0,207.9 C579.2,208.1 582.9,213.2 584.2,211.6 C585.5,210.0 588.0,195.8 589.0,193.8 C590.0,191.8 592.1,196.1 592.8,194.8 C593.5,193.5 594.7,183.6 595.3,183.0 C595.9,182.4 596.8,193.6 597.8,189.3 C598.8,185.0 602.6,151.3 603.7,145.8 C604.8,140.3 606.7,142.5 607.4,142.1 C608.1,141.7 609.3,143.1 609.9,142.1 C610.5,141.1 612.2,133.6 612.9,133.5 C613.6,133.4 615.3,139.1 616.0,141.0 C616.7,142.9 618.5,149.0 619.3,150.0 C620.1,151.0 622.0,148.4 622.7,149.6 C623.4,150.8 624.8,159.7 625.5,160.7 C626.2,161.7 627.7,158.4 628.4,158.2 C629.1,158.0 630.9,158.4 631.6,159.0 C632.3,159.6 633.8,160.8 634.6,163.2 C635.4,165.6 637.6,177.0 638.3,179.2 C639.0,181.4 640.1,180.0 640.8,181.7 C641.5,183.4 643.8,192.1 644.5,194.0 C645.2,195.9 646.1,195.9 647.0,197.8 C647.9,199.7 650.9,208.7 651.9,210.0 C652.9,211.3 654.9,206.6 655.6,209.0 C656.3,211.4 657.1,229.0 658.1,231.0 C659.1,233.0 663.1,226.6 664.3,226.2 C665.5,225.8 666.6,229.1 668.0,227.4 C669.4,225.7 675.0,213.5 676.6,211.9 C678.2,210.3 680.6,212.8 681.6,213.8 C682.6,214.8 684.5,220.7 685.3,220.8 C686.1,220.9 687.7,214.6 688.5,215.0 C689.3,215.4 691.2,223.3 692.0,224.2 C692.8,225.1 694.5,225.0 695.2,222.5 C695.9,220.0 696.7,206.8 697.7,202.7 C698.7,198.6 702.4,186.4 703.8,187.1 C705.2,187.8 708.6,207.9 710.0,208.9 C711.4,209.9 714.9,196.6 716.2,195.3 C717.5,194.0 720.1,196.2 721.1,197.8 C722.1,199.4 724.1,207.5 724.8,208.9 C725.5,210.3 726.6,211.0 727.3,210.1 C728.0,209.2 729.8,202.6 731.0,201.0 C732.2,199.4 735.8,199.8 737.2,196.5 C738.6,193.2 742.2,175.4 743.4,173.0 C744.6,170.6 746.1,171.2 747.1,175.5 C748.1,179.8 751.0,205.5 752.0,210.1 C753.0,214.7 754.5,213.3 755.7,215.0 C756.9,216.7 760.5,223.4 761.9,225.0 C763.3,226.6 766.9,228.9 768.1,228.7 C769.3,228.5 770.9,225.7 771.8,223.7 C772.7,221.7 774.7,211.1 776.0,211.4 C777.3,211.7 781.8,225.1 783.0,226.2 C784.2,227.3 785.7,221.3 786.6,221.2 C787.5,221.1 788.9,226.7 790.4,225.0 C791.9,223.3 797.4,206.4 799.3,206.5 C801.2,206.6 805.3,224.9 806.7,226.0 C808.1,227.1 810.2,219.4 811.3,215.7 C812.4,212.0 815.1,197.0 816.0,194.4 C816.9,191.8 818.0,194.2 818.8,193.5 C819.6,192.8 821.7,189.1 822.5,188.8 C823.3,188.5 824.7,190.6 825.3,190.7 C825.9,190.8 827.3,191.7 828.0,189.8 C828.7,187.9 830.1,175.6 831.2,174.6 C832.3,173.6 835.8,183.0 837.3,181.4 C838.8,179.8 842.4,161.9 843.8,161.0 C845.2,160.1 848.0,174.3 849.4,174.0 C850.8,173.7 854.2,158.4 855.9,158.6 C857.6,158.8 862.8,174.5 864.2,175.9 C865.6,177.3 867.2,171.1 868.0,170.3 C868.8,169.5 870.0,171.7 870.7,169.4 C871.4,167.1 873.3,151.1 874.4,150.8 C875.5,150.5 879.0,168.3 880.0,166.6 C881.0,164.9 882.2,139.9 882.8,136.0 C883.4,132.1 884.7,132.2 885.5,133.2 C886.3,134.2 888.5,144.1 889.3,144.3 C890.1,144.5 892.1,136.1 892.5,135.0" stroke="#16c784" stroke-width="2.5" fill="none" stroke-linejoin="round" clip-path="url(#above)"/>
<path d="M9.5,279.4 C9.8,280.1 11.5,284.0 12.5,285.0 C13.5,286.0 16.7,288.6 18.0,288.0 C19.3,287.4 22.6,281.9 24.0,280.0 C25.4,278.1 28.5,273.2 30.0,272.0 C31.5,270.8 35.4,268.7 37.0,270.0 C38.6,271.3 42.2,279.6 44.0,283.0 C45.8,286.4 50.5,296.1 52.0,299.0 C53.5,301.9 55.8,308.0 57.0,308.0 C58.2,308.0 60.8,299.9 62.0,299.0 C63.2,298.1 65.8,299.1 67.0,300.0 C68.2,300.9 71.2,306.6 72.0,307.0 C72.8,307.4 72.8,299.7 74.0,303.0 C75.2,306.3 80.0,332.0 82.0,335.0 C84.0,338.0 89.1,329.6 91.0,329.0 C92.9,328.4 96.8,330.5 98.0,330.0 C99.2,329.5 100.1,325.5 101.0,325.0 C101.9,324.5 104.7,324.5 106.0,326.0 C107.3,327.5 110.5,337.1 112.0,338.0 C113.5,338.9 117.5,331.2 119.0,334.0 C120.5,336.8 124.1,359.7 125.0,362.0 C125.9,364.3 125.6,353.3 127.0,354.0 C128.4,354.7 135.1,370.4 137.0,368.0 C138.9,365.6 141.5,336.3 143.0,333.0 C144.5,329.7 148.6,338.5 150.0,340.0 C151.4,341.5 153.7,344.0 155.0,346.0 C156.3,348.0 159.5,355.9 161.0,357.0 C162.5,358.1 166.6,355.1 168.0,355.0 C169.4,354.9 171.9,356.0 173.0,356.0 C174.1,356.0 175.8,354.6 177.0,355.0 C178.2,355.4 181.7,356.7 183.0,359.0 C184.3,361.3 186.6,373.5 188.0,375.0 C189.4,376.5 193.6,372.2 195.0,372.0 C196.4,371.8 198.5,373.1 200.0,373.0 C201.5,372.9 206.6,370.7 208.0,371.0 C209.4,371.3 211.2,377.5 212.4,375.5 C213.6,373.5 217.1,361.1 218.5,353.7 C219.9,346.3 223.5,317.4 224.7,311.7 C225.9,306.0 227.6,305.7 228.4,304.8 C229.2,303.9 230.9,304.7 231.6,303.8 C232.3,302.9 233.7,298.1 234.6,297.4 C235.5,296.7 238.6,296.5 239.6,298.0 C240.6,299.5 242.4,308.9 243.3,310.5 C244.2,312.1 246.0,310.3 247.0,311.7 C248.0,313.1 250.8,321.6 252.0,322.8 C253.2,324.0 255.8,322.1 256.9,321.6 C258.0,321.1 260.9,318.8 261.8,318.6 C262.7,318.4 263.8,324.5 264.8,319.6 C265.8,314.7 269.3,281.4 270.5,277.0 C271.7,272.6 274.3,279.5 275.4,281.5 C276.5,283.5 279.1,292.2 280.3,294.4 C281.5,296.6 284.3,298.4 285.3,300.6 C286.3,302.8 288.0,311.4 289.0,313.0 C290.0,314.6 292.7,314.7 294.0,314.0 C295.3,313.3 298.9,308.6 300.0,306.7 C301.1,304.8 302.8,298.3 303.8,297.6 C304.8,296.9 307.6,300.1 308.8,300.6 C310.0,301.1 312.5,301.9 313.7,301.8 C314.9,301.7 317.7,296.0 318.7,299.8 C319.7,303.6 321.7,328.6 322.4,334.0 C323.1,339.4 324.1,344.9 324.8,346.3 C325.5,347.7 326.9,344.1 328.0,345.8 C329.1,347.5 333.0,363.0 334.2,361.0 C335.4,359.0 337.3,335.6 338.4,329.0 C339.5,322.4 342.5,308.3 343.4,304.8 C344.3,301.3 345.0,302.5 345.9,299.3 C346.8,296.1 349.8,279.4 350.8,277.0 C351.8,274.6 353.6,279.1 354.5,279.0 C355.4,278.9 357.0,273.4 358.2,275.8 C359.4,278.2 363.0,298.1 364.4,299.3 C365.8,300.5 369.2,287.4 370.6,286.5 C372.0,285.6 375.6,289.5 376.8,292.0 C378.0,294.5 379.2,304.5 380.5,308.0 C381.8,311.5 386.5,321.2 387.9,321.6 C389.3,322.0 391.6,317.3 392.8,311.7 C394.0,306.1 396.9,277.9 397.8,273.4 C398.7,268.9 400.0,272.3 400.7,272.9 C401.4,273.5 403.2,276.7 404.0,278.3 C404.8,279.9 407.0,286.8 407.7,287.0 C408.4,287.2 409.0,285.2 410.0,279.6 C411.0,274.0 414.9,241.7 416.0,238.8 C417.1,235.9 418.8,252.4 419.8,254.8 C420.8,257.2 423.7,258.6 424.7,259.8 C425.7,261.0 427.2,262.0 428.4,264.7 C429.6,267.4 433.4,281.2 434.6,282.8 C435.8,284.4 437.4,279.8 438.3,278.3 C439.2,276.8 441.3,271.1 442.0,269.7 C442.7,268.3 443.6,267.8 444.5,266.0 C445.4,264.2 448.1,255.9 449.4,254.4 C450.7,252.9 454.3,252.8 455.6,252.9 C456.9,253.0 459.4,253.8 460.6,255.6 C461.8,257.4 464.3,267.3 465.5,268.4 C466.7,269.5 469.5,264.5 470.5,264.7 C471.5,264.9 473.3,268.0 474.2,269.7 C475.1,271.4 476.9,278.2 477.9,279.6 C478.9,281.0 481.8,281.8 482.8,282.0 C483.8,282.2 485.5,286.3 486.5,281.3 C487.5,276.3 490.2,243.5 491.5,238.8 C492.8,234.1 496.5,240.7 497.7,240.8 C498.9,240.9 500.5,243.7 501.4,240.0 C502.3,236.3 504.3,215.3 505.0,209.0 C505.7,202.7 506.6,189.7 507.5,185.6 C508.4,181.5 511.5,172.1 512.5,174.0 C513.5,175.9 515.2,197.6 516.2,201.7 C517.2,205.8 519.7,206.6 521.0,209.0 C522.3,211.4 525.7,220.5 527.3,222.7 C528.9,224.9 533.4,227.9 534.7,228.1 C536.0,228.3 537.5,225.5 538.4,224.0 C539.3,222.5 541.2,216.5 542.2,215.3 C543.2,214.1 546.1,214.7 547.0,214.0 C547.9,213.3 548.3,212.5 549.6,209.0 C550.9,205.5 556.5,185.5 558.2,183.9 C559.9,182.3 563.1,193.9 564.4,195.5 C565.7,197.1 568.1,195.5 569.3,197.2 C570.5,198.9 573.3,208.7 574.3,209.9 C575.3,211.1 576.8,207.7 578.0,207.9 C579.2,208.1 582.9,213.2 584.2,211.6 C585.5,210.0 588.0,195.8 589.0,193.8 C590.0,191.8 592.1,196.1 592.8,194.8 C593.5,193.5 594.7,183.6 595.3,183.0 C595.9,182.4 596.8,193.6 597.8,189.3 C598.8,185.0 602.6,151.3 603.7,145.8 C604.8,140.3 606.7,142.5 607.4,142.1 C608.1,141.7 609.3,143.1 609.9,142.1 C610.5,141.1 612.2,133.6 612.9,133.5 C613.6,133.4 615.3,139.1 616.0,141.0 C616.7,142.9 618.5,149.0 619.3,150.0 C620.1,151.0 622.0,148.4 622.7,149.6 C623.4,150.8 624.8,159.7 625.5,160.7 C626.2,161.7 627.7,158.4 628.4,158.2 C629.1,158.0 630.9,158.4 631.6,159.0 C632.3,159.6 633.8,160.8 634.6,163.2 C635.4,165.6 637.6,177.0 638.3,179.2 C639.0,181.4 640.1,180.0 640.8,181.7 C641.5,183.4 643.8,192.1 644.5,194.0 C645.2,195.9 646.1,195.9 647.0,197.8 C647.9,199.7 650.9,208.7 651.9,210.0 C652.9,211.3 654.9,206.6 655.6,209.0 C656.3,211.4 657.1,229.0 658.1,231.0 C659.1,233.0 663.1,226.6 664.3,226.2 C665.5,225.8 666.6,229.1 668.0,227.4 C669.4,225.7 675.0,213.5 676.6,211.9 C678.2,210.3 680.6,212.8 681.6,213.8 C682.6,214.8 684.5,220.7 685.3,220.8 C686.1,220.9 687.7,214.6 688.5,215.0 C689.3,215.4 691.2,223.3 692.0,224.2 C692.8,225.1 694.5,225.0 695.2,222.5 C695.9,220.0 696.7,206.8 697.7,202.7 C698.7,198.6 702.4,186.4 703.8,187.1 C705.2,187.8 708.6,207.9 710.0,208.9 C711.4,209.9 714.9,196.6 716.2,195.3 C717.5,194.0 720.1,196.2 721.1,197.8 C722.1,199.4 724.1,207.5 724.8,208.9 C725.5,210.3 726.6,211.0 727.3,210.1 C728.0,209.2 729.8,202.6 731.0,201.0 C732.2,199.4 735.8,199.8 737.2,196.5 C738.6,193.2 742.2,175.4 743.4,173.0 C744.6,170.6 746.1,171.2 747.1,175.5 C748.1,179.8 751.0,205.5 752.0,210.1 C753.0,214.7 754.5,213.3 755.7,215.0 C756.9,216.7 760.5,223.4 761.9,225.0 C763.3,226.6 766.9,228.9 768.1,228.7 C769.3,228.5 770.9,225.7 771.8,223.7 C772.7,221.7 774.7,211.1 776.0,211.4 C777.3,211.7 781.8,225.1 783.0,226.2 C784.2,227.3 785.7,221.3 786.6,221.2 C787.5,221.1 788.9,226.7 790.4,225.0 C791.9,223.3 797.4,206.4 799.3,206.5 C801.2,206.6 805.3,224.9 806.7,226.0 C808.1,227.1 810.2,219.4 811.3,215.7 C812.4,212.0 815.1,197.0 816.0,194.4 C816.9,191.8 818.0,194.2 818.8,193.5 C819.6,192.8 821.7,189.1 822.5,188.8 C823.3,188.5 824.7,190.6 825.3,190.7 C825.9,190.8 827.3,191.7 828.0,189.8 C828.7,187.9 830.1,175.6 831.2,174.6 C832.3,173.6 835.8,183.0 837.3,181.4 C838.8,179.8 842.4,161.9 843.8,161.0 C845.2,160.1 848.0,174.3 849.4,174.0 C850.8,173.7 854.2,158.4 855.9,158.6 C857.6,158.8 862.8,174.5 864.2,175.9 C865.6,177.3 867.2,171.1 868.0,170.3 C868.8,169.5 870.0,171.7 870.7,169.4 C871.4,167.1 873.3,151.1 874.4,150.8 C875.5,150.5 879.0,168.3 880.0,166.6 C881.0,164.9 882.2,139.9 882.8,136.0 C883.4,132.1 884.7,132.2 885.5,133.2 C886.3,134.2 888.5,144.1 889.3,144.3 C890.1,144.5 892.1,136.1 892.5,135.0" stroke="#ea3943" stroke-width="2.5" fill="none" stroke-linejoin="round" clip-path="url(#below)"/>
</svg><div class="b" style="left:12px;top:267px;width:73px;height:33px;border-radius:6px;background:rgba(38,41,54,0.72);backdrop-filter:blur(3px)"></div><div class="t" style="left:17.5px;top:272.93px;font-size:14px;line-height:16.09px;color:#a4a9ba;font-weight:700;letter-spacing:0.8px">0.0<sub style="top:0.34em;font-size:0.8em">5</sub>3208</div>
<div class="t" style="left:900px;top:210.43px;font-size:14px;line-height:16.09px;color:#a1a7bb;font-weight:400;letter-spacing:0.85px;-webkit-text-stroke:0.3px #a1a7bb">0.0<sub>5</sub>325</div>
<div class="t" style="left:900px;top:283.73px;font-size:14px;line-height:16.09px;color:#a1a7bb;font-weight:400;letter-spacing:0.85px;-webkit-text-stroke:0.3px #a1a7bb">0.0<sub>5</sub>32</div>
<div class="t" style="left:900px;top:356.43px;font-size:14px;line-height:16.09px;color:#a1a7bb;font-weight:400;letter-spacing:0.85px;-webkit-text-stroke:0.3px #a1a7bb">0.0<sub>5</sub>315</div>
<div class="t" style="left:900px;top:429.13px;font-size:14px;line-height:16.09px;color:#a1a7bb;font-weight:400;letter-spacing:0.85px;-webkit-text-stroke:0.3px #a1a7bb">0.0<sub>5</sub>31</div>
<div class="b" style="left:893px;top:120px;width:78px;height:37px;border-radius:3px;background:#16c784"></div><div class="t" style="left:900px;top:127.43px;font-size:14px;line-height:16.09px;color:#ffffff;font-weight:700;letter-spacing:0.75px">0.0<sub style="font-size:0.78em;top:0.68em">5</sub>3307</div>
<div class="t" style="left:946px;top:488.33px;font-size:14px;line-height:16.09px;color:#a1a7bb;font-weight:700;">USD</div>
<svg width="1008" height="647"><g stroke="#dfe2ea" stroke-width="2.9" fill="none" stroke-linecap="round" stroke-linejoin="round"><path d="M722.3,451.2 A13.1,13.1 0 1 1 726.6,441.5"/><path d="M703.8,446 L709.8,436.3 Q711.6,433.6 712.2,437 L712.6,444 Q713,446 714.2,444 L719.2,436.5 Q721,434 721.4,437.5 L722,442.5 Q722.8,446 726.6,441.5"/></g></svg><div class="t" style="left:737.5px;top:430.50px;font-size:19px;line-height:21.83px;color:#e3e5ec;font-weight:400;-webkit-text-stroke:0.6px #e3e5ec;letter-spacing:0.2px">CoinMarketCap</div>
<div class="t" style="left:22.900000000000006px;width:120px;text-align:center;top:513.43px;font-size:14px;line-height:16px;color:#a1a7bb;letter-spacing:0.2px">9:00 PM</div>
<div class="t" style="left:132px;width:120px;text-align:center;top:513.43px;font-size:14px;line-height:16px;color:#a1a7bb;letter-spacing:0.2px">9 Mar</div>
<div class="t" style="left:241.2px;width:120px;text-align:center;top:513.43px;font-size:14px;line-height:16px;color:#a1a7bb;letter-spacing:0.2px">3:00 AM</div>
<div class="t" style="left:350px;width:120px;text-align:center;top:513.43px;font-size:14px;line-height:16px;color:#a1a7bb;letter-spacing:0.2px">6:00 AM</div>
<div class="t" style="left:459px;width:120px;text-align:center;top:513.43px;font-size:14px;line-height:16px;color:#a1a7bb;letter-spacing:0.2px">9:00 AM</div>
<div class="t" style="left:568.5px;width:120px;text-align:center;top:513.43px;font-size:14px;line-height:16px;color:#a1a7bb;letter-spacing:0.2px">12:00 PM</div>
<div class="t" style="left:677.5px;width:120px;text-align:center;top:513.43px;font-size:14px;line-height:16px;color:#a1a7bb;letter-spacing:0.2px">3:00 PM</div>
<div class="t" style="left:786.5px;width:120px;text-align:center;top:513.43px;font-size:14px;line-height:16px;color:#a1a7bb;letter-spacing:0.2px">6:00 PM</div>
<svg width="1008" height="647"><path d="M10,551 L20,538 Q22,536 25,536 L50,536 A14.75,14.75 0 0 1 50,565.5 L25,565.5 Q22,565.5 20,563.5 Z" fill="#6b7190"/><path d="M25.8,554.4 A6.3,6.3 0 1 0 26.2,545.9" stroke="#fff" stroke-width="1.7" fill="none" stroke-linecap="round"/><path d="M21.9,546.9 L26.9,545.6 L24.3,551.2 Z" fill="#fff" stroke="#fff" stroke-width="0.6" stroke-linejoin="round"/><path d="M29.8,546.6 V549.9 L33,552.2" stroke="#fff" stroke-width="1.6" fill="none" stroke-linecap="round" stroke-linejoin="round"/></svg><div class="t" style="left:42.5px;top:543.13px;font-size:14px;line-height:16.09px;color:#ffffff;font-weight:700;">17</div>
<svg width="1008" height="647">
<g stroke="#222531" stroke-width="1.2">
<line x1="10" y1="569" x2="891" y2="569"/>
<line x1="74" y1="569" x2="74" y2="619"/>
<line x1="226.5" y1="569" x2="226.5" y2="619"/>
<line x1="378.5" y1="569" x2="378.5" y2="619"/>
<line x1="531.5" y1="569" x2="531.5" y2="619"/>
<line x1="681.7" y1="569" x2="681.7" y2="619"/>
<line x1="835.5" y1="569" x2="835.5" y2="619"/>
</g>
<path d="M9.7,619.5 C11.7,619.4 18.8,619.2 21.6,618.6 C24.5,618.0 25.3,616.3 26.8,616.0 C28.3,615.7 28.8,616.7 30.5,616.8 C32.2,616.9 31.9,616.6 37.2,616.8 C42.5,617.0 57.5,618.0 62.5,618.0 C67.5,618.0 63.0,617.0 67.0,616.8 C71.0,616.5 72.5,616.3 86.3,616.5 C100.1,616.7 136.6,617.7 150.0,618.0 C163.4,618.3 163.2,618.4 166.8,618.3 C170.4,618.1 168.3,617.4 171.3,617.1 C174.3,616.9 179.2,616.7 184.6,616.8 C190.0,616.9 199.8,617.5 204.0,617.5 C208.2,617.5 204.8,616.6 210.0,616.5 C215.2,616.4 227.0,616.6 235.2,616.8 C243.4,617.0 252.7,617.5 259.0,617.5 C265.3,617.5 270.1,617.4 273.2,616.8 C276.3,616.1 276.8,614.5 277.9,613.6 C279.0,612.7 278.2,613.8 280.0,611.6 C281.8,609.4 286.4,601.4 288.8,600.3 C291.2,599.1 292.6,604.0 294.7,604.7 C296.8,605.4 299.9,604.4 301.7,604.7 C303.5,605.0 303.8,606.1 305.6,606.3 C307.4,606.5 310.5,605.1 312.6,605.7 C314.8,606.4 316.7,610.3 318.5,610.2 C320.3,610.1 321.4,605.8 323.5,605.0 C325.6,604.2 328.4,606.0 331.4,605.3 C334.4,604.6 338.6,603.1 341.3,600.7 C344.0,598.3 345.3,592.3 347.3,590.8 C349.3,589.3 351.2,591.6 353.3,591.8 C355.4,592.0 358.2,591.0 360.2,591.8 C362.2,592.6 363.4,595.6 365.2,596.7 C367.0,597.8 369.1,598.5 371.1,598.3 C373.1,598.0 375.2,594.5 377.0,595.2 C378.8,595.9 380.0,601.1 382.0,602.3 C384.0,603.5 387.0,603.2 389.0,602.3 C391.0,601.4 392.0,597.9 394.0,597.1 C396.0,596.3 398.8,597.3 400.9,597.7 C403.0,598.1 404.3,598.5 406.8,599.7 C409.3,600.9 413.2,604.2 415.8,605.0 C418.4,605.8 419.7,604.5 422.7,604.7 C425.7,604.9 429.8,606.3 433.6,606.3 C437.4,606.3 442.5,605.6 445.5,604.7 C448.5,603.8 450.2,601.7 451.5,601.1 C452.8,600.5 451.9,600.8 453.0,601.1 C454.1,601.4 455.4,603.2 458.0,603.1 C460.6,603.0 465.7,601.1 468.8,600.7 C471.9,600.3 474.5,600.4 476.8,600.7 C479.1,601.0 480.9,603.2 482.7,602.7 C484.5,602.2 486.0,601.5 487.7,597.7 C489.4,593.9 490.7,583.0 492.7,579.9 C494.7,576.8 497.5,579.1 499.6,579.3 C501.8,579.5 503.8,581.4 505.6,581.3 C507.4,581.2 508.7,580.1 510.5,578.9 C512.3,577.7 515.2,574.4 516.5,573.9 C517.8,573.4 517.5,573.8 518.5,575.9 C519.5,578.0 520.8,584.8 522.4,586.4 C524.0,588.0 526.4,586.8 528.4,585.8 C530.4,584.8 532.3,580.3 534.3,580.5 C536.3,580.7 538.3,586.6 540.3,587.2 C542.3,587.9 544.4,584.1 546.2,584.4 C548.0,584.7 549.4,587.5 551.2,589.2 C553.0,590.9 555.1,592.7 557.1,594.8 C559.1,596.9 561.1,600.7 563.1,601.7 C565.1,602.7 567.0,600.8 569.0,600.7 C571.0,600.6 572.0,600.1 575.0,601.1 C578.0,602.1 583.9,605.7 586.9,606.7 C589.9,607.7 590.2,607.6 592.9,607.1 C595.5,606.6 600.2,603.8 602.8,603.7 C605.4,603.6 606.1,606.2 608.7,606.7 C611.4,607.2 615.7,607.4 618.7,606.7 C621.7,606.0 624.0,603.4 626.6,602.7 C629.2,602.0 632.2,603.3 634.5,602.3 C636.8,601.3 637.9,598.7 640.5,596.7 C643.1,594.7 647.3,590.9 649.9,590.4 C652.5,589.9 653.8,592.3 655.9,593.8 C658.0,595.2 660.8,598.5 662.8,599.1 C664.8,599.7 665.0,596.7 667.8,597.1 C670.6,597.5 676.4,601.6 679.7,601.7 C683.0,601.8 684.8,599.0 687.6,597.7 C690.4,596.4 693.0,593.6 696.5,593.8 C700.0,594.0 705.0,598.0 708.5,598.7 C712.0,599.5 714.3,598.1 717.4,598.3 C720.5,598.5 724.0,599.2 727.3,599.7 C730.6,600.2 733.7,601.7 737.2,601.3 C740.7,600.9 745.1,596.9 748.1,597.1 C751.1,597.3 753.1,601.8 755.1,602.3 C757.1,602.8 758.4,600.5 760.0,600.3 C761.6,600.1 762.9,600.1 765.0,601.1 C767.1,602.1 770.2,605.4 772.9,606.3 C775.5,607.2 778.2,606.3 780.9,606.7 C783.5,607.1 785.5,608.0 788.8,608.7 C792.1,609.4 797.4,610.7 800.7,611.0 C804.0,611.3 805.7,610.7 808.7,610.6 C811.7,610.5 816.0,610.3 818.6,610.6 C821.2,610.9 822.4,611.9 824.5,612.2 C826.6,612.5 829.6,612.6 831.5,612.2 C833.4,611.9 834.0,610.9 835.9,610.1 C837.8,609.4 840.5,608.0 842.8,607.7 C845.1,607.4 847.8,608.1 849.8,608.5 C851.8,608.9 852.9,609.7 854.7,610.1 C856.5,610.5 859.0,610.3 860.7,610.8 C862.4,611.3 863.3,612.8 865.1,613.1 C866.9,613.4 869.5,612.7 871.6,612.4 C873.7,612.1 875.5,611.4 877.5,611.4 C879.5,611.4 881.4,612.1 883.5,612.4 C885.6,612.7 888.9,613.0 890.0,613.1 L890.0,618.6 L9.7,618.6 Z" fill="#20253e"/>
<path d="M9.7,619.5 C11.7,619.4 18.8,619.2 21.6,618.6 C24.5,618.0 25.3,616.3 26.8,616.0 C28.3,615.7 28.8,616.7 30.5,616.8 C32.2,616.9 31.9,616.6 37.2,616.8 C42.5,617.0 57.5,618.0 62.5,618.0 C67.5,618.0 63.0,617.0 67.0,616.8 C71.0,616.5 72.5,616.3 86.3,616.5 C100.1,616.7 136.6,617.7 150.0,618.0 C163.4,618.3 163.2,618.4 166.8,618.3 C170.4,618.1 168.3,617.4 171.3,617.1 C174.3,616.9 179.2,616.7 184.6,616.8 C190.0,616.9 199.8,617.5 204.0,617.5 C208.2,617.5 204.8,616.6 210.0,616.5 C215.2,616.4 227.0,616.6 235.2,616.8 C243.4,617.0 252.7,617.5 259.0,617.5 C265.3,617.5 270.1,617.4 273.2,616.8 C276.3,616.1 276.8,614.5 277.9,613.6 C279.0,612.7 278.2,613.8 280.0,611.6 C281.8,609.4 286.4,601.4 288.8,600.3 C291.2,599.1 292.6,604.0 294.7,604.7 C296.8,605.4 299.9,604.4 301.7,604.7 C303.5,605.0 303.8,606.1 305.6,606.3 C307.4,606.5 310.5,605.1 312.6,605.7 C314.8,606.4 316.7,610.3 318.5,610.2 C320.3,610.1 321.4,605.8 323.5,605.0 C325.6,604.2 328.4,606.0 331.4,605.3 C334.4,604.6 338.6,603.1 341.3,600.7 C344.0,598.3 345.3,592.3 347.3,590.8 C349.3,589.3 351.2,591.6 353.3,591.8 C355.4,592.0 358.2,591.0 360.2,591.8 C362.2,592.6 363.4,595.6 365.2,596.7 C367.0,597.8 369.1,598.5 371.1,598.3 C373.1,598.0 375.2,594.5 377.0,595.2 C378.8,595.9 380.0,601.1 382.0,602.3 C384.0,603.5 387.0,603.2 389.0,602.3 C391.0,601.4 392.0,597.9 394.0,597.1 C396.0,596.3 398.8,597.3 400.9,597.7 C403.0,598.1 404.3,598.5 406.8,599.7 C409.3,600.9 413.2,604.2 415.8,605.0 C418.4,605.8 419.7,604.5 422.7,604.7 C425.7,604.9 429.8,606.3 433.6,606.3 C437.4,606.3 442.5,605.6 445.5,604.7 C448.5,603.8 450.2,601.7 451.5,601.1 C452.8,600.5 451.9,600.8 453.0,601.1 C454.1,601.4 455.4,603.2 458.0,603.1 C460.6,603.0 465.7,601.1 468.8,600.7 C471.9,600.3 474.5,600.4 476.8,600.7 C479.1,601.0 480.9,603.2 482.7,602.7 C484.5,602.2 486.0,601.5 487.7,597.7 C489.4,593.9 490.7,583.0 492.7,579.9 C494.7,576.8 497.5,579.1 499.6,579.3 C501.8,579.5 503.8,581.4 505.6,581.3 C507.4,581.2 508.7,580.1 510.5,578.9 C512.3,577.7 515.2,574.4 516.5,573.9 C517.8,573.4 517.5,573.8 518.5,575.9 C519.5,578.0 520.8,584.8 522.4,586.4 C524.0,588.0 526.4,586.8 528.4,585.8 C530.4,584.8 532.3,580.3 534.3,580.5 C536.3,580.7 538.3,586.6 540.3,587.2 C542.3,587.9 544.4,584.1 546.2,584.4 C548.0,584.7 549.4,587.5 551.2,589.2 C553.0,590.9 555.1,592.7 557.1,594.8 C559.1,596.9 561.1,600.7 563.1,601.7 C565.1,602.7 567.0,600.8 569.0,600.7 C571.0,600.6 572.0,600.1 575.0,601.1 C578.0,602.1 583.9,605.7 586.9,606.7 C589.9,607.7 590.2,607.6 592.9,607.1 C595.5,606.6 600.2,603.8 602.8,603.7 C605.4,603.6 606.1,606.2 608.7,606.7 C611.4,607.2 615.7,607.4 618.7,606.7 C621.7,606.0 624.0,603.4 626.6,602.7 C629.2,602.0 632.2,603.3 634.5,602.3 C636.8,601.3 637.9,598.7 640.5,596.7 C643.1,594.7 647.3,590.9 649.9,590.4 C652.5,589.9 653.8,592.3 655.9,593.8 C658.0,595.2 660.8,598.5 662.8,599.1 C664.8,599.7 665.0,596.7 667.8,597.1 C670.6,597.5 676.4,601.6 679.7,601.7 C683.0,601.8 684.8,599.0 687.6,597.7 C690.4,596.4 693.0,593.6 696.5,593.8 C700.0,594.0 705.0,598.0 708.5,598.7 C712.0,599.5 714.3,598.1 717.4,598.3 C720.5,598.5 724.0,599.2 727.3,599.7 C730.6,600.2 733.7,601.7 737.2,601.3 C740.7,600.9 745.1,596.9 748.1,597.1 C751.1,597.3 753.1,601.8 755.1,602.3 C757.1,602.8 758.4,600.5 760.0,600.3 C761.6,600.1 762.9,600.1 765.0,601.1 C767.1,602.1 770.2,605.4 772.9,606.3 C775.5,607.2 778.2,606.3 780.9,606.7 C783.5,607.1 785.5,608.0 788.8,608.7 C792.1,609.4 797.4,610.7 800.7,611.0 C804.0,611.3 805.7,610.7 808.7,610.6 C811.7,610.5 816.0,610.3 818.6,610.6 C821.2,610.9 822.4,611.9 824.5,612.2 C826.6,612.5 829.6,612.6 831.5,612.2 C833.4,611.9 834.0,610.9 835.9,610.1 C837.8,609.4 840.5,608.0 842.8,607.7 C845.1,607.4 847.8,608.1 849.8,608.5 C851.8,608.9 852.9,609.7 854.7,610.1 C856.5,610.5 859.0,610.3 860.7,610.8 C862.4,611.3 863.3,612.8 865.1,613.1 C866.9,613.4 869.5,612.7 871.6,612.4 C873.7,612.1 875.5,611.4 877.5,611.4 C879.5,611.4 881.4,612.1 883.5,612.4 C885.6,612.7 888.9,613.0 890.0,613.1" stroke="#4a6fe3" stroke-width="1.6" fill="none" stroke-linejoin="round"/>
<line x1="891" y1="569" x2="891" y2="619" stroke="#343845" stroke-width="1.6"/>
<ellipse cx="890.5" cy="593.5" rx="9.3" ry="12" fill="#222632" stroke="#30343f" stroke-width="1.2"/>
<rect x="887.5" y="589.3" width="1.4" height="8.4" fill="#a0a4b0"/><rect x="891.5" y="589.3" width="1.4" height="8.4" fill="#a0a4b0"/>
</svg><div class="t" style="left:15px;width:120px;text-align:center;top:626.23px;font-size:14px;line-height:16px;color:#a1a7bb">Jul '23</div>
<div class="t" style="left:167.7px;width:120px;text-align:center;top:626.23px;font-size:14px;line-height:16px;color:#a1a7bb">Jan '24</div>
<div class="t" style="left:320px;width:120px;text-align:center;top:626.23px;font-size:14px;line-height:16px;color:#a1a7bb">Jul '24</div>
<div class="t" style="left:473px;width:120px;text-align:center;top:626.23px;font-size:14px;line-height:16px;color:#a1a7bb">Jan '25</div>
<div class="t" style="left:623px;width:120px;text-align:center;top:626.23px;font-size:14px;line-height:16px;color:#a1a7bb">Jul '25</div>
<div class="t" style="left:776px;width:120px;text-align:center;top:626.23px;font-size:14px;line-height:16px;color:#a1a7bb">Jan '26</div>
<svg width="1008" height="647"><path d="M800,535.7 L834,535.7 L838.3,531 L842.6,535.7 L877,535.7 A15,15 0 0 1 877,565.7 L800,565.7 A15,15 0 0 1 800,535.7 Z" fill="#3861fb"/><path d="M809.9,551.5 A7,7 0 1 0 797,554.8 L795.6,558.5 L801,558.3 Q805.5,558.6 808.4,556.4" stroke="#fff" stroke-width="1.7" fill="none" stroke-linejoin="round" stroke-linecap="round"/><path d="M798.6,553.6 L801.6,548.4 Q802.4,547.2 802.8,548.8 L803.2,552.8 Q803.4,553.8 804,552.8 L806.6,548.4 Q807.4,547.2 807.8,548.8 L808.1,552.4 Q808.8,554.4 809.9,551.5" stroke="#fff" stroke-width="1.6" fill="none" stroke-linejoin="round" stroke-linecap="round"/><path d="M873.5,548 L877.5,551.8 L873.5,555.6" stroke="#fff" stroke-width="1.6" fill="none" stroke-linecap="round" stroke-linejoin="round"/></svg><div class="t" style="left:815.5px;top:543.38px;font-size:13.5px;line-height:15.51px;color:#ffffff;font-weight:700;">Analyze</div>

</body></html>
